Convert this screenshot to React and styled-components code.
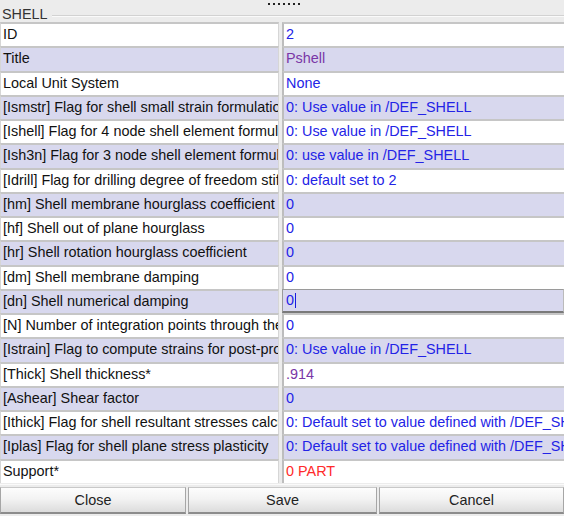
import React from "react";
import styled, { createGlobalStyle } from "styled-components";

const Global = createGlobalStyle`
  html, body { margin: 0; padding: 0; background: #ececec; }
  body { font-family: "Liberation Sans", Arial, sans-serif; }
  * { box-sizing: border-box; }
`;

const Page = styled.div`
  width: 564px;
  height: 516px;
  display: flex;
  flex-direction: column;
  background: #ececec;
  overflow: hidden;
`;

const Header = styled.div`
  height: 22px;
  display: flex;
  flex-direction: column;
`;

const Grip = styled.div`
  height: 7px;
  display: flex;
  justify-content: center;
  align-items: flex-start;
  gap: 3px;
  padding-top: 3px;
  padding-left: 4px;
`;

const Dot = styled.span`
  width: 2px;
  height: 2px;
  background: #222;
`;

const LegendRow = styled.div`
  height: 15px;
  display: flex;
  align-items: flex-start;
`;

const Legend = styled.span`
  font-size: 14.4px;
  line-height: 15px;
  color: #333;
  padding: 0 4px 0 2px;
`;

const LegendLine = styled.div`
  flex: 1;
  margin-top: 8px;
  border-top: 1px solid #d2d2d2;
  border-bottom: 1px solid #fafafa;
`;

const Table = styled.div`
  display: grid;
  grid-auto-rows: 24.25px;
`;

const Row = styled.div`
  display: grid;
  grid-template-columns: 279px 1fr;
  column-gap: 3px;
`;

const Cell = styled.div`
  background: ${(p) => (p.$alt ? "#d8d8ee" : "#ffffff")};
  border-top: 2px solid #c6c6c6;
  border-left: ${(p) => (p.$value ? "2px solid #bdbdbd" : "1px solid #d6d6d6")};
  border-right: ${(p) => (p.$value ? "none" : "1px solid #d6d6d6")};
  padding-left: ${(p) => (p.$value ? "2px" : "2px")};
  font-size: 14.4px;
  line-height: 21px;
  white-space: nowrap;
  overflow: hidden;
  color: ${(p) => p.$color || "#111"};
  ${(p) =>
    p.$focus &&
    `
    border-top: 1px solid #9a9a9a;
    border-left: 1px solid #9a9a9a;
    border-bottom: 2px solid #7a7a7a;
    border-right: 1px solid #bbb;
    line-height: 20px;
    padding-left: 3px;
  `}
`;

const Caret = styled.span`
  display: inline-block;
  width: 1px;
  height: 15px;
  background: #1a1ae0;
  vertical-align: -3px;
  margin-left: 1px;
`;

const ButtonBar = styled.div`
  margin-top: 1px;
  padding: 2px 0 3px;
  border-top: 1px solid #fafafa;
  display: grid;
  grid-template-columns: 186px 189px 1fr;
  column-gap: 2px;
`;

const Button = styled.button`
  height: 27px;
  border: 1px solid #a6a6a6;
  border-top-color: #c8c8c8;
  border-bottom: 2px solid #8c8c8c;
  background: linear-gradient(#fdfdfd 0%, #f3f3f3 45%, #dcdcdc 100%);
  font-family: "Liberation Sans", Arial, sans-serif;
  font-size: 14.4px;
  color: #222;
  padding: 0;
`;

const BLUE = "#2323e6";

const rows = [
  ["ID", "2"],
  ["Title", "Pshell", "#7a36a6"],
  ["Local Unit System", "None"],
  ["[Ismstr] Flag for shell small strain formulation", "0: Use value in /DEF_SHELL"],
  ["[Ishell] Flag for 4 node shell element formulation", "0: Use value in /DEF_SHELL"],
  ["[Ish3n] Flag for 3 node shell element formulation", "0: use value in /DEF_SHELL"],
  ["[Idrill] Flag for drilling degree of freedom stiffness", "0: default set to 2"],
  ["[hm] Shell membrane hourglass coefficient", "0"],
  ["[hf] Shell out of plane hourglass", "0"],
  ["[hr] Shell rotation hourglass coefficient", "0"],
  ["[dm] Shell membrane damping", "0"],
  ["[dn] Shell numerical damping", "0", null, true],
  ["[N] Number of integration points through the thickness", "0"],
  ["[Istrain] Flag to compute strains for post-processing", "0: Use value in /DEF_SHELL"],
  ["[Thick] Shell thickness*", ".914", "#7a36a6"],
  ["[Ashear] Shear factor", "0"],
  ["[Ithick] Flag for shell resultant stresses calculation", "0: Default set to value defined with /DEF_SHELL"],
  ["[Iplas] Flag for shell plane stress plasticity", "0: Default set to value defined with /DEF_SHELL"],
  ["Support*", "0 PART", "#ff2a2a"],
];

export default function App() {
  return (
    <Page>
      <Global />
      <Header>
        <Grip>
          {Array.from({ length: 7 }).map((_, i) => (
            <Dot key={i} />
          ))}
        </Grip>
        <LegendRow>
          <Legend>SHELL</Legend>
          <LegendLine />
        </LegendRow>
      </Header>
      <Table>
        {rows.map(([label, value, color, focus], i) => {
          const alt = i % 2 === 1;
          return (
            <Row key={i}>
              <Cell $alt={alt}>{label}</Cell>
              <Cell $alt={alt} $value $focus={focus} $color={color || BLUE}>
                {value}
                {focus && <Caret />}
              </Cell>
            </Row>
          );
        })}
      </Table>
      <ButtonBar>
        <Button>Close</Button>
        <Button>Save</Button>
        <Button>Cancel</Button>
      </ButtonBar>
    </Page>
  );
}
